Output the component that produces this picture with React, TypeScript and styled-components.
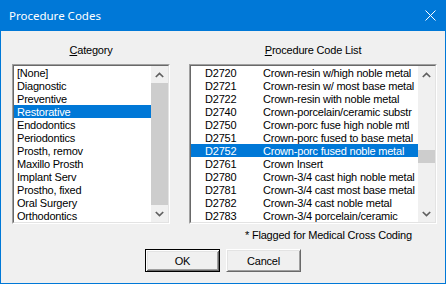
import styled, { createGlobalStyle } from 'styled-components'

const GlobalStyle = createGlobalStyle`
  html, body {
    margin: 0;
    padding: 0;
    background: #ffffff;
  }
  * {
    box-sizing: border-box;
  }
`

const categories = [
  '[None]',
  'Diagnostic',
  'Preventive',
  'Restorative',
  'Endodontics',
  'Periodontics',
  'Prosth, remov',
  'Maxillo Prosth',
  'Implant Serv',
  'Prostho, fixed',
  'Oral Surgery',
  'Orthodontics',
]

const procedures = [
  ['D2720', 'Crown-resin w/high noble metal'],
  ['D2721', 'Crown-resin w/ most base metal'],
  ['D2722', 'Crown-resin with noble metal'],
  ['D2740', 'Crown-porcelain/ceramic substr'],
  ['D2750', 'Crown-porc fuse high noble mtl'],
  ['D2751', 'Crown-porc fused to base metal'],
  ['D2752', 'Crown-porc fused noble metal'],
  ['D2761', 'Crown Insert'],
  ['D2780', 'Crown-3/4 cast high noble metal'],
  ['D2781', 'Crown-3/4 cast most base metal'],
  ['D2782', 'Crown-3/4 cast noble metal'],
  ['D2783', 'Crown-3/4 porcelain/ceramic'],
]

const Chevron = ({ down }: { down?: boolean }) => (
  <svg width="9" height="6" viewBox="0 0 9 6">
    <polyline
      points={down ? '0.8,1 4.5,4.6 8.2,1' : '0.8,5 4.5,1.4 8.2,5'}
      fill="none"
      stroke="#606060"
      strokeWidth="1.7"
    />
  </svg>
)

const ScrollBar = ({ thumbTop, thumbHeight }: { thumbTop: number; thumbHeight: number }) => (
  <ScrollTrack>
    <ArrowButton><Chevron /></ArrowButton>
    <ThumbArea $offset={thumbTop}>
      <Thumb $height={thumbHeight} />
    </ThumbArea>
    <ArrowButton><Chevron down /></ArrowButton>
  </ScrollTrack>
)

export default function App() {
  return (
    <>
      <GlobalStyle />
      <Window>
        <TitleBar>
          <Title>Procedure Codes</Title>
          <svg width="11" height="11" viewBox="0 0 11 11">
            <path d="M0.5 0.5 L10.5 10.5 M10.5 0.5 L0.5 10.5" stroke="#ffffff" strokeWidth="1" />
          </svg>
        </TitleBar>
        <Body>
          <Columns>
            <Column>
              <Label><u>C</u>ategory</Label>
              <ListBox>
                <ListInner>
                  <Items>
                    {categories.map((c, i) => (
                      <CategoryRow key={c} $selected={i === 3}>{c}</CategoryRow>
                    ))}
                  </Items>
                  <ScrollBar thumbTop={0} thumbHeight={122} />
                </ListInner>
              </ListBox>
            </Column>
            <Column>
              <Label><u>P</u>rocedure Code List</Label>
              <ListBox>
                <ListInner>
                  <Items>
                    {procedures.map(([code, desc], i) => (
                      <CodeRow key={code} $selected={i === 6}>
                        <span>{code}</span>
                        <span>{desc}</span>
                      </CodeRow>
                    ))}
                  </Items>
                  <ScrollBar thumbTop={67} thumbHeight={13} />
                </ListInner>
              </ListBox>
              <Footnote>* Flagged for Medical Cross Coding</Footnote>
            </Column>
          </Columns>
          <ButtonRow>
            <DialogButton $default>OK</DialogButton>
            <DialogButton>Cancel</DialogButton>
          </ButtonRow>
        </Body>
      </Window>
    </>
  )
}

const Window = styled.div`
  width: 446px;
  height: 284px;
  display: flex;
  flex-direction: column;
  border: 1px solid #0078d7;
  border-top: none;
  background: #f0f0f0;
  font-family: "Liberation Sans", Arial, sans-serif;
  font-size: 11px;
  letter-spacing: -0.2px;
  color: #000000;
`

const TitleBar = styled.div`
  height: 31px;
  flex: none;
  display: flex;
  align-items: center;
  justify-content: space-between;
  padding: 0 9px 0 8px;
  background: #0078d7;
  color: #ffffff;
`

const Title = styled.span`
  font-family: "Noto Sans", "Open Sans", sans-serif;
  font-size: 11.5px;
  letter-spacing: 0;
`

const Body = styled.div`
  flex: 1;
  display: flex;
  flex-direction: column;
  padding: 13px 0 0 11px;
`

const Columns = styled.div`
  display: grid;
  grid-template-columns: 158px 248px;
  column-gap: 19px;
`

const Column = styled.div`
  display: flex;
  flex-direction: column;
`

const Label = styled.div`
  height: 13px;
  line-height: 13px;
  text-align: center;
  margin-bottom: 7px;
`

const ListBox = styled.div`
  height: 160px;
  border: 1px solid;
  border-color: #a0a0a0 #ffffff #ffffff #a0a0a0;
`

const ListInner = styled.div`
  height: 100%;
  display: flex;
  border: 1px solid;
  border-color: #696969 #e3e3e3 #e3e3e3 #696969;
  background: #ffffff;
`

const Items = styled.div`
  flex: 1;
  overflow: hidden;
`

const RowBase = styled.div<{ $selected?: boolean }>`
  height: 13px;
  line-height: 15px;
  white-space: nowrap;
  background: ${({ $selected }) => ($selected ? '#0078d7' : 'transparent')};
  color: ${({ $selected }) => ($selected ? '#ffffff' : '#000000')};
`

const CategoryRow = styled(RowBase)`
  padding-left: 3px;
`

const CodeRow = styled(RowBase)`
  display: grid;
  grid-template-columns: 58px 1fr;
  padding-left: 14px;
`

const ScrollTrack = styled.div`
  width: 17px;
  flex: none;
  display: flex;
  flex-direction: column;
  background: #f0f0f0;
`

const ArrowButton = styled.div`
  height: 17px;
  flex: none;
  display: flex;
  align-items: center;
  justify-content: center;
`

const ThumbArea = styled.div<{ $offset: number }>`
  flex: 1;
  padding-top: ${({ $offset }) => $offset}px;
`

const Thumb = styled.div<{ $height: number }>`
  height: ${({ $height }) => $height}px;
  background: #cdcdcd;
`

const Footnote = styled.div`
  margin-top: 5px;
  padding-left: 56px;
  line-height: 13px;
  white-space: nowrap;
`

const ButtonRow = styled.div`
  display: flex;
  justify-content: center;
  gap: 6px;
  margin: 7px 0 0 -11px;
`

const DialogButton = styled.div<{ $default?: boolean }>`
  width: 75px;
  height: 23px;
  display: flex;
  align-items: center;
  justify-content: center;
  background: #f0f0f0;
  border: 1px solid;
  border-color: ${({ $default }) =>
    $default ? '#000000' : '#ffffff #696969 #696969 #ffffff'};
  box-shadow: ${({ $default }) =>
    $default
      ? 'inset 1px 1px #ffffff, inset -1px -1px #696969, inset 2px 2px #e3e3e3, inset -2px -2px #a0a0a0'
      : 'inset 1px 1px #e3e3e3, inset -1px -1px #a0a0a0'};
`
